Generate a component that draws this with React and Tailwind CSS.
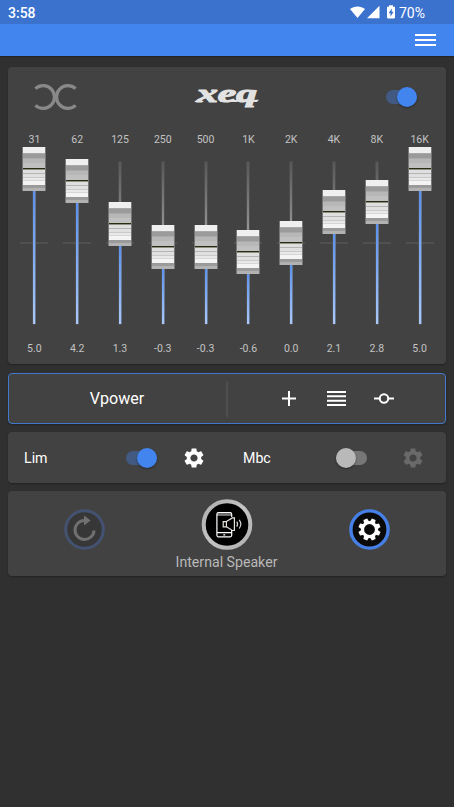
import React from 'react';

const bands = [
  { hz: '31', gain: '5.0', top: 147 },
  { hz: '62', gain: '4.2', top: 159 },
  { hz: '125', gain: '1.3', top: 202 },
  { hz: '250', gain: '-0.3', top: 225.4 },
  { hz: '500', gain: '-0.3', top: 225.4 },
  { hz: '1K', gain: '-0.6', top: 230 },
  { hz: '2K', gain: '0.0', top: 221 },
  { hz: '4K', gain: '2.1', top: 190 },
  { hz: '8K', gain: '2.8', top: 179.5 },
  { hz: '16K', gain: '5.0', top: 147 },
];

const GEAR =
  'M19.14 12.94c.04-.3.06-.61.06-.94 0-.32-.02-.64-.07-.94l2.03-1.58c.18-.14.23-.41.12-.61l-1.92-3.32c-.12-.22-.37-.29-.59-.22l-2.39.96c-.5-.38-1.03-.7-1.62-.94l-.36-2.54c-.04-.24-.24-.41-.48-.41h-3.84c-.24 0-.43.17-.47.41l-.36 2.54c-.59.24-1.13.57-1.62.94l-2.39-.96c-.22-.08-.47 0-.59.22L2.74 8.87c-.12.21-.08.47.12.61l2.03 1.58c-.05.3-.09.63-.09.94s.02.64.07.94l-2.03 1.58c-.18.14-.23.41-.12.61l1.92 3.32c.12.22.37.29.59.22l2.39-.96c.5.38 1.03.7 1.62.94l.36 2.54c.05.24.24.41.48.41h3.84c.24 0 .44-.17.47-.41l.36-2.54c.59-.24 1.13-.56 1.62-.94l2.39.96c.22.08.47 0 .59-.22l1.92-3.32c.12-.22.07-.47-.12-.61l-2.01-1.58zM12 15.6c-1.98 0-3.6-1.62-3.6-3.6s1.62-3.6 3.6-3.6 3.6 1.62 3.6 3.6-1.62 3.6-3.6 3.6z';

function Gear({ className }) {
  return (
    <svg viewBox="0 0 24 24" className={className} fill="currentColor">
      <path d={GEAR} />
    </svg>
  );
}

function Switch({ on }) {
  return (
    <div className={`flex h-5 w-[31px] items-center ${on ? 'justify-end' : 'justify-start'} relative`}>
      <div className={`absolute inset-x-0 top-[3px] h-[14px] rounded-full ${on ? 'bg-[#425a82]' : 'bg-[#777777]'}`} />
      <div className={`relative size-5 rounded-full shadow-[0_1px_2px_rgba(0,0,0,0.4)] ${on ? 'bg-[#4285ef]' : 'bg-[#b9b9b9]'}`} />
    </div>
  );
}

// Metallic fader cap: light top edge, dark ridges, index line, bright ribs, shaded foot.
function FaderCap() {
  return (
    <svg width="24" height="44" viewBox="0 0 24 44" shapeRendering="crispEdges">
      <rect x="0" y="0" width="24" height="44" fill="#777" />
      <g>
        <rect x="0.5" y="0" width="22.5" height="6" fill="#efefef" />
        <rect x="0.5" y="6" width="22.5" height="1" fill="#a9a9a9" />
        <rect x="0.5" y="7" width="22.5" height="4" fill="#9b9b9b" />
        <rect x="0.5" y="11" width="22.5" height="1" fill="#aaaaaa" />
        <rect x="0.5" y="12" width="22.5" height="4" fill="#b7b7b7" />
        <rect x="0.5" y="16" width="22.5" height="5" fill="#c0c0c0" />
        <rect x="0.5" y="21" width="22.5" height="1" fill="#292b12" />
        <rect x="0.5" y="22" width="22.5" height="1" fill="#8f8f82" />
        <rect x="0.5" y="23" width="22.5" height="3" fill="#dedfde" />
        <rect x="0.5" y="26" width="22.5" height="1" fill="#b4b4b4" />
        <rect x="0.5" y="27" width="22.5" height="3" fill="#dfe0df" />
        <rect x="0.5" y="30" width="22.5" height="1" fill="#c9c9c9" />
        <rect x="0.5" y="31" width="22.5" height="2" fill="#e8e9e8" />
        <rect x="0.5" y="33" width="22.5" height="1" fill="#d6d6d6" />
        <rect x="0.5" y="34" width="22.5" height="4" fill="#f3f4f3" />
        <rect x="0.5" y="38" width="22.5" height="1" fill="#999999" />
        <rect x="0.5" y="39" width="22.5" height="2" fill="#9b9b9b" />
        <rect x="0.5" y="41" width="22.5" height="3" fill="#b2b2b2" />
      </g>
    </svg>
  );
}

function Band({ hz, gain, top }) {
  const capTop = top - 147;
  return (
    <div className="flex min-w-0 flex-1 flex-col items-center text-[10.5px] leading-3 text-[#c3c3c3]">
      <span>{hz}</span>
      <div className="relative mt-px h-[177px] w-full">
        <div className="absolute left-1/2 top-[95px] h-[1.5px] w-7 -translate-x-1/2 bg-[#505050]" />
        <div className="absolute bottom-0 left-1/2 top-[15px] -ml-px w-[2px] bg-linear-to-b from-[#575757] to-[#a2a2a2] to-50% shadow-[0_0_0_0.5px_#5a5a5a]" />
        <div
          className="absolute bottom-0 left-1/2 -ml-px w-[2px] bg-linear-to-b from-[#568eed] to-[#abc8f7] shadow-[0.5px_0_0_#7d9fd4]"
          style={{ top: capTop + 40 }}
        />
        <div className="absolute left-1/2 -translate-x-1/2" style={{ top: capTop }}>
          <FaderCap />
        </div>
      </div>
      <span className="mt-[19px]">{gain}</span>
    </div>
  );
}

function Card({ className, children }) {
  return (
    <section className={`rounded-[4px] bg-[#424242] shadow-[0_1px_2px_rgba(0,0,0,0.3)] ${className}`}>{children}</section>
  );
}

function StatusBar() {
  return (
    <div className="flex h-6 items-center bg-[#3b72cd] pl-2 pr-[29px] pt-[2px] text-white">
      <span className="text-[14px] font-medium leading-4">3:58</span>
      <svg className="ml-auto h-4 w-[47px]" viewBox="0 0 47 16" fill="#fff">
        <path d="M1 4C5.2.5 11.8.5 16 4L8.5 13Z" />
        <path d="M30.5 .8V13.2H18Z" />
        <path d="M40 .3h4v1.5h2V12.6a.8.8 0 0 1-.8.8h-6.4A.8.8 0 0 1 38 12.6V1.8h2Z" />
        <path d="M42.8 3.6 39.6 8.2h1.9v3.6l3.1-5h-1.8Z" fill="#3b72cd" />
      </svg>
      <span className="ml-[3px] text-[14px] leading-4">70%</span>
    </div>
  );
}

export default function App() {
  return (
    <div className="h-[807px] w-[454px] overflow-hidden bg-[#303030] font-['Roboto',sans-serif]">
      <StatusBar />
      <header className="flex h-8 items-center justify-end bg-[#4285ef] pr-[18px] shadow-[0_1px_1px_rgba(0,0,0,0.25)]">
        <div className="flex w-[21px] flex-col gap-[3px]">
          <div className="h-[2px] bg-white" />
          <div className="h-[2px] bg-white" />
          <div className="h-[2px] bg-white" />
        </div>
      </header>

      <main className="flex flex-col px-2 pt-[11px]">
        <Card className="h-[297px]">
          <div className="flex h-[60px] items-center justify-between pl-[26px] pr-[29px]">
            <svg width="43" height="28" viewBox="0 0 43 28" fill="none" stroke="#898989" strokeWidth="3.3">
              <path d="M1.4 5.6A11.4 11.4 0 1 1 1.4 22.4" />
              <path d="M41.6 5.6A11.4 11.4 0 1 0 41.6 22.4" />
            </svg>
            <svg width="68" height="44" viewBox="0 0 68 44" className="-ml-[9px] overflow-visible" fill="#e2e2e2">
              <text
                x="4"
                y="26.6"
                fontFamily="'Liberation Serif', serif"
                fontSize="26"
                fontWeight="700"
                fontStyle="italic"
                textLength="60"
                lengthAdjust="spacingAndGlyphs"
                stroke="#e2e2e2"
                strokeWidth="1.1"
              >
                xeq
              </text>
              <path d="M1 27 6 23.6 11 27ZM27 25h20l-3 2H27ZM50 24.8h16l-2 2.1H49Z" />
            </svg>
            <Switch on />
          </div>
          <div className="flex px-[5px] pt-[7px]">
            {bands.map((b) => (
              <Band key={b.hz} {...b} />
            ))}
          </div>
        </Card>

        <Card className="mt-[9px] flex h-[51px] items-center border border-[#4379cd] text-white">
          <div className="w-[217px] pr-px pt-px text-center text-[16.1px]">Vpower</div>
          <div className="h-9 w-[2px] bg-[#4e4e4e]" />
          <div className="flex flex-1 items-center pl-[54px]">
            <svg width="14" height="15" viewBox="0 0 14 15" stroke="#fff" strokeWidth="2">
              <path d="M0 7.5h14M7 0v15" />
            </svg>
            <svg className="ml-[31px]" width="19" height="15" viewBox="0 0 19 15" stroke="#fff" strokeWidth="1.9">
              <path d="M0 1h19M0 5.3h19M0 9.7h19M0 14h19" />
            </svg>
            <svg className="ml-[28px]" width="20" height="11" viewBox="0 0 20 11" fill="none" stroke="#fff" strokeWidth="2">
              <path d="M0 5.5h5.5M14.5 5.5H20" />
              <circle cx="10" cy="5.5" r="4.2" />
            </svg>
          </div>
        </Card>

        <Card className="mt-2 flex h-[51px] items-center text-[14.2px] text-white">
          <div className="flex w-[219px] items-center pl-4">
            <span className="w-[102px] pt-[2px]">Lim</span>
            <Switch on />
            <Gear className="ml-[25px] size-6" />
          </div>
          <div className="flex flex-1 items-center pl-4">
            <span className="w-[93px] pt-[2px]">Mbc</span>
            <Switch />
            <Gear className="ml-[34px] size-6 text-[#696969]" />
          </div>
        </Card>

        <Card className="mt-2 grid h-[85px] grid-cols-[152px_133px_153px] pt-2">
          <div className="flex items-start justify-center pt-[10px]">
            <svg width="41" height="41" viewBox="0 0 41 41" fill="none">
              <circle cx="20.5" cy="20.5" r="18.8" fill="#373737" stroke="#445271" strokeWidth="3" />
              <path d="M22 11.5h-1.5a9.5 9.5 0 1 0 9.5 10" stroke="#707070" strokeWidth="3" />
              <path d="M20 6.5 26.7 11.6 20 16.4Z" fill="#707070" />
            </svg>
          </div>
          <div className="flex flex-col items-center">
            <svg width="52" height="52" viewBox="0 0 52 52" fill="none">
              <defs>
                <linearGradient id="silver" x1="0" y1="0" x2="1" y2="1">
                  <stop offset="0" stopColor="#adadad" />
                  <stop offset=".5" stopColor="#c4c4c4" />
                  <stop offset="1" stopColor="#b0b0b0" />
                </linearGradient>
              </defs>
              <circle cx="26" cy="25.5" r="23.3" fill="#000" stroke="url(#silver)" strokeWidth="4" />
              <path d="M16 14.5h14v2.4H16Z" fill="#777" />
              <path
                d="M30.7 18v-2.8a1.6 1.6 0 0 0-1.6-1.6H17.5a1.6 1.6 0 0 0-1.6 1.6v21.1a1.6 1.6 0 0 0 1.6 1.6h11.6a1.6 1.6 0 0 0 1.6-1.6V31M15.9 33.7h14.8M22.3 35.8h2"
                stroke="#fff"
                strokeWidth="1.2"
              />
              <path d="M22.2 22.6h3.2v5.2h-3.2ZM25.4 22.6l6-3.7h2v12.6h-2l-6-3.7" stroke="#e7e4dc" strokeWidth="1.2" />
              <path d="M35.7 22.7q1.8 2.5 0 5M38.2 20.9q3.3 4.3 0 8.6" stroke="#d7d7d7" strokeWidth="1.2" />
            </svg>
            <span className="mt-px text-[14.15px] leading-5 text-[#b9b9b9]">Internal Speaker</span>
          </div>
          <div className="flex items-start justify-center pt-[10px]">
            <svg width="41" height="41" viewBox="0 0 41 41">
              <circle cx="20.5" cy="20.5" r="18.6" fill="#0a0a0a" stroke="#4680e6" strokeWidth="3.4" />
              <g fill="#fff">
                {[22.5, 67.5, 112.5, 157.5, 202.5, 247.5, 292.5, 337.5].map((a) => (
                  <path key={a} d="M17.7 13.5 18.5 9.4h4l.8 4.1Z" transform={`rotate(${a} 20.5 20.5)`} />
                ))}
              </g>
              <circle cx="20.5" cy="20.5" r="7" fill="#0a0a0a" stroke="#fff" strokeWidth="3.2" />
            </svg>
          </div>
        </Card>
      </main>
    </div>
  );
}
